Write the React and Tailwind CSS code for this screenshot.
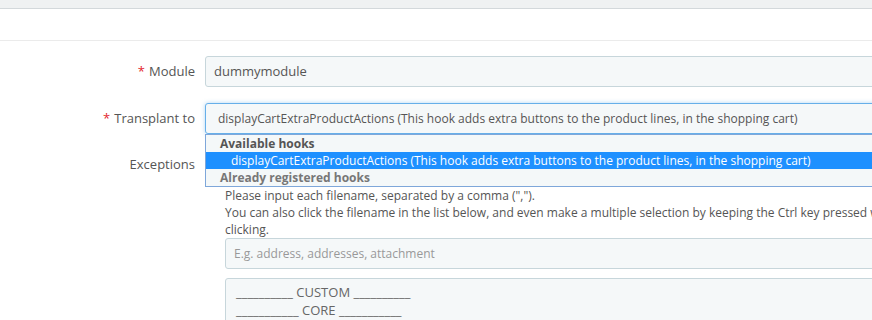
import React from 'react';

const hookText =
  'displayCartExtraProductActions (This hook adds extra buttons to the product lines, in the shopping cart)';

function Label({required, children, className = ''}) {
  return (
    <div className={`w-[195px] shrink-0 text-right text-[13px] text-[#555] ${className}`}>
      {required ? <span className="mr-1 text-[#e3262e]">*</span> : null}
      {children}
    </div>
  );
}

function HookDropdown() {
  return (
    <div className="absolute left-0 top-full z-10 w-[900px] border border-[#7ea7da] bg-[#f4f8f9] text-[12px] leading-[17px]">
      <div className="pl-[14px] font-bold text-[#555]">Available hooks</div>
      <div className="bg-[#1e90ff] pl-[25px] text-white">{hookText}</div>
      <div className="pl-[14px] font-bold text-[#777]">Already registered hooks</div>
    </div>
  );
}

export default function App() {
  return (
    <div className="h-[320px] w-[872px] overflow-hidden bg-white font-['Open_Sans',sans-serif]">
      <div className="h-[9px] border-b border-[#d3d8db] bg-[#eff1f2]" />
      <div className="h-[32px] border-b border-[#ebebeb]" />

      <div className="flex flex-col gap-[16px] pt-[15px]">
        <div className="flex items-center">
          <Label required>Module</Label>
          <div className="ml-[10px] flex h-[31px] w-[700px] shrink-0 items-center rounded-[3px] border border-[#c7d6db] bg-[#f5f8f9] pl-[8px] text-[13px] text-[#555]">
            dummymodule
          </div>
        </div>

        <div className="flex items-center">
          <Label required>Transplant to</Label>
          <div className="relative ml-[10px] w-[700px] shrink-0">
            <div className="flex h-[31px] items-center whitespace-nowrap rounded-[3px] border border-[#66afe9] bg-[#f5f8f9] pl-[12px] text-[12px] text-[#555] shadow-[0_0_4px_rgba(102,175,233,0.5)]">
              {hookText}
            </div>
            <HookDropdown />
          </div>
        </div>

        <div className="flex items-start">
          <Label className="pt-[5px]">Exceptions</Label>
          <div className="ml-[30px] w-[700px] shrink-0 pt-[37px]">
            <p className="whitespace-nowrap text-[12px] leading-[17px] text-[#555]">
              Please input each filename, separated by a comma (&quot;,&quot;).
            </p>
            <p className="w-[690px] text-[12px] leading-[17px] text-[#555]">
              You can also click the filename in the list below, and even make a multiple selection by keeping the Ctrl key pressed while
              clicking.
            </p>
            <div className="flex h-[31px] w-[700px] items-center rounded-[3px] border border-[#c7d6db] bg-[#f5f8f9] pl-[8px] text-[12px] text-[#999]">
              E.g. address, addresses, attachment
            </div>
            <div className="mt-[9px] h-[80px] w-[700px] rounded-[3px] border border-[#c7d6db] bg-[#f5f8f9] px-[10px] pt-[4px] text-[13px] leading-[18px] text-[#666]">
              <div>__________ CUSTOM __________</div>
              <div>___________ CORE ___________</div>
            </div>
          </div>
        </div>
      </div>
    </div>
  );
}
